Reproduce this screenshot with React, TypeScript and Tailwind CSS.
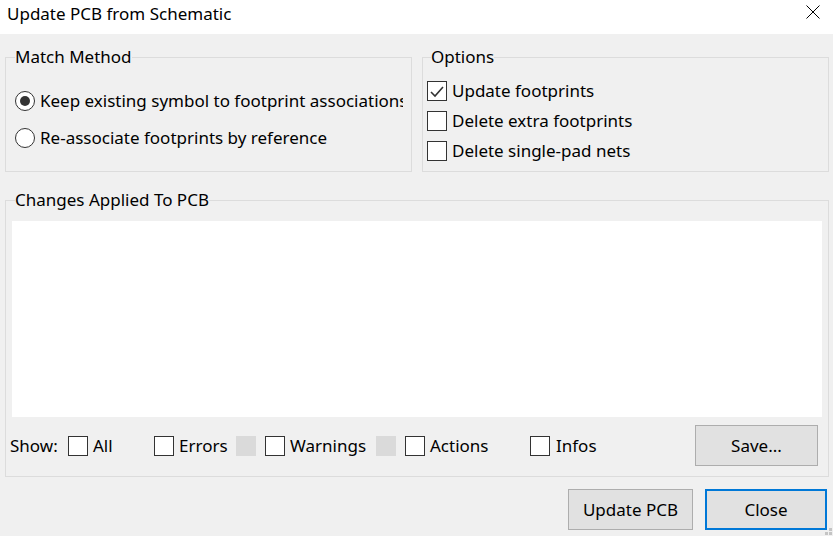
import React from "react";

function Checkbox({ checked = false }: { checked?: boolean }) {
  return (
    <div className="w-[20px] h-[20px] border border-[#333333] bg-white shrink-0 flex items-center justify-center">
      {checked && (
        <svg width="18" height="18" viewBox="0 0 18 18">
          <polyline points="3,10 7,14 15,5" fill="none" stroke="#333333" strokeWidth="1.6" />
        </svg>
      )}
    </div>
  );
}

function Radio({ checked = false }: { checked?: boolean }) {
  return (
    <div className="w-[20px] h-[20px] rounded-full border border-[#333333] bg-white shrink-0 flex items-center justify-center">
      {checked && <div className="w-[10px] h-[10px] rounded-full bg-[#333333]" />}
    </div>
  );
}

export default function App() {
  return (
    <div className="w-[833px] h-[536px] bg-[#f0f0f0] flex flex-col relative overflow-hidden text-black font-['Noto_Sans',sans-serif] text-[17px] leading-[22px]">
      {/* Title bar */}
      <div className="h-[34px] bg-white flex items-center justify-between pl-[7px] pr-[13px] pb-[6px] shrink-0">
        <span className="text-[17px]">Update PCB from Schematic</span>
        <svg width="14" height="14" viewBox="0 0 14 14" className="mb-[4px]">
          <line x1="0.5" y1="0.5" x2="13.5" y2="13.5" stroke="#000" strokeWidth="1" />
          <line x1="13.5" y1="0.5" x2="0.5" y2="13.5" stroke="#000" strokeWidth="1" />
        </svg>
      </div>

      {/* Top row */}
      <div className="flex gap-[10px] pl-[5px] pr-[4px] mt-[12px]">
        <fieldset className="w-[407px] h-[126px] border border-[#dcdcdc] pl-[9px] pr-[8px] min-w-0">
          <legend className="px-0">Match Method</legend>
          <div className="flex flex-col gap-[17px] pt-[23px]">
            <div className="flex items-center gap-[5px] h-[20px]">
              <Radio checked />
              <div className="w-[363px] overflow-hidden whitespace-nowrap">Keep existing symbol to footprint associations</div>
            </div>
            <div className="flex items-center gap-[5px] h-[20px]">
              <Radio />
              <div className="whitespace-nowrap">Re-associate footprints by reference</div>
            </div>
          </div>
        </fieldset>
        <fieldset className="flex-1 h-[126px] border border-[#dcdcdc] pl-[4px] pr-[4px] min-w-0">
          <legend className="ml-[4px] px-0">Options</legend>
          <div className="flex flex-col gap-[10px] pt-[13px]">
            <div className="flex items-center gap-[5px] h-[20px]">
              <Checkbox checked />
              <span className="whitespace-nowrap">Update footprints</span>
            </div>
            <div className="flex items-center gap-[5px] h-[20px]">
              <Checkbox />
              <span className="whitespace-nowrap">Delete extra footprints</span>
            </div>
            <div className="flex items-center gap-[5px] h-[20px]">
              <Checkbox />
              <span className="whitespace-nowrap">Delete single-pad nets</span>
            </div>
          </div>
        </fieldset>
      </div>

      {/* Changes */}
      <div className="pl-[5px] pr-[4px] mt-[17px]">
        <fieldset className="h-[288px] border border-[#dcdcdc] px-[6px] min-w-0">
          <legend className="ml-[3px] px-0">Changes Applied To PCB</legend>
          <div className="mt-[10px] h-[196px] bg-white" />
          <div className="flex items-center mt-[8px] -ml-[2px] pr-[4px] h-[41px]">
            <span className="w-[58px] shrink-0">Show:</span>
            <div className="w-[86px] flex items-center gap-[5px] shrink-0">
              <Checkbox />
              <span>All</span>
            </div>
            <div className="w-[82px] flex items-center gap-[5px] shrink-0">
              <Checkbox />
              <span>Errors</span>
            </div>
            <div className="w-[20px] h-[20px] bg-[#dadada] shrink-0 mr-[9px]" />
            <div className="w-[111px] flex items-center gap-[5px] shrink-0">
              <Checkbox />
              <span>Warnings</span>
            </div>
            <div className="w-[20px] h-[20px] bg-[#dadada] shrink-0 mr-[9px]" />
            <div className="w-[125px] flex items-center gap-[5px] shrink-0">
              <Checkbox />
              <span>Actions</span>
            </div>
            <div className="flex-1 flex items-center gap-[6px]">
              <Checkbox />
              <span>Infos</span>
            </div>
            <button className="w-[123px] h-[41px] bg-[#e1e1e1] border border-[#adadad] shrink-0">Save...</button>
          </div>
        </fieldset>
      </div>

      {/* Bottom buttons */}
      <div className="flex justify-end gap-[12px] pr-[6px] mt-[12px]">
        <button className="w-[125px] h-[41px] bg-[#e1e1e1] border border-[#adadad]">Update PCB</button>
        <button className="w-[122px] h-[41px] bg-[#e1e1e1] border-2 border-[#0078d7]">Close</button>
      </div>

      {/* Resize grip */}
      <div className="absolute right-[1px] bottom-[5px] w-[3px] h-[3px] bg-[#c4c4c4]" />
      <div className="absolute right-[1px] bottom-[1px] w-[3px] h-[3px] bg-[#c4c4c4]" />
      <div className="absolute right-[5px] bottom-[1px] w-[3px] h-[3px] bg-[#c4c4c4]" />
    </div>
  );
}
